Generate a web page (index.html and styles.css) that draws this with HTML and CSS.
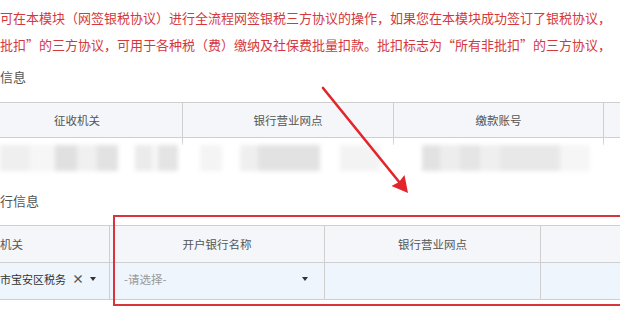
FILE: index.html
```html
<!DOCTYPE html>
<html lang="zh-CN">
<head>
<meta charset="utf-8">
<title>网签银税协议</title>
<link rel="stylesheet" href="styles.css">
</head>
<body>
<div class="page">
  <p class="notice">可在本模块（网签银税协议）进行全流程网签银税三方协议的操作，如果您在本模块成功签订了银税协议，</p>
  <p class="notice">批扣”的三方协议，可用于各种税（费）缴纳及社保费批量扣款。批扣标志为“所有非批扣”的三方协议，</p>

  <h3 class="section-title first">信息</h3>
  <div class="table t1">
    <div class="cell head">征收机关</div>
    <div class="cell head">银行营业网点</div>
    <div class="cell head">缴款账号</div>
    <div class="cell head"></div>
    <div class="cell stub"></div>
    <div class="cell stub"></div>
    <div class="cell stub"></div>
    <div class="cell stub"></div>
  </div>
  <div class="mosaic"></div>

  <h3 class="section-title second">行信息</h3>
  <div class="table t2">
    <div class="cell head lead">机关</div>
    <div class="cell head">开户银行名称</div>
    <div class="cell head">银行营业网点</div>
    <div class="cell head"></div>
    <div class="cell body select-cell filled">
      <span class="sel-text">市宝安区税务</span>
      <span class="clear">×</span>
      <span class="caret"></span>
    </div>
    <div class="cell body select-cell empty">
      <span class="placeholder">-请选择-</span>
      <span class="caret"></span>
    </div>
    <div class="cell body"></div>
    <div class="cell body"></div>
  </div>
</div>

<svg class="arrow" width="620" height="309" viewBox="0 0 620 309">
  <line x1="323" y1="88" x2="400" y2="183" stroke="#e3262b" stroke-width="2.6" stroke-linecap="round"/>
  <polygon points="408,193 391.5,186 399,182 404.5,175" fill="#e3262b"/>
</svg>
<div class="highlight"></div>
</body>
</html>
```

FILE: styles.css
```css
html, body {
  margin: 0;
  padding: 0;
}
body {
  width: 620px;
  height: 309px;
  overflow: hidden;
  background: #ffffff;
  font-family: "Noto Sans CJK SC", "Noto Sans", sans-serif;
  position: relative;
}
.page {
  padding-top: 4px;
}
.notice {
  margin: 0;
  font-size: 13px;
  line-height: 27px;
  color: #d4373c;
  white-space: nowrap;
}
.section-title {
  margin: 0;
  font-size: 13px;
  line-height: 20px;
  font-weight: normal;
  color: #555555;
}
.section-title.first {
  margin: 9px 0 15px;
}
.section-title.second {
  margin: 20px 0 14px;
}
.table {
  display: grid;
  border-top: 1px solid #cfcfcf;
}
.t1 {
  margin-left: -28px;
  grid-template-columns: 210px 211px 210px 210px;
}
.t2 {
  grid-template-columns: 109px 215px 216px 216px;
  border-bottom: 1px solid #cfcfcf;
}
.cell {
  border-left: 1px solid #cfcfcf;
  box-sizing: border-box;
}
.cell:nth-child(4n+1) {
  border-left: none;
}
.cell.head {
  height: 35px;
  background: #f4f6f9;
  border-bottom: 1px solid #cfcfcf;
  display: flex;
  align-items: center;
  justify-content: center;
  font-size: 11.5px;
  color: #555555;
}
.cell.head.lead {
  justify-content: flex-start;
}
.t2 .cell.head {
  height: 37px;
}
.cell.stub {
  height: 7px;
}
.cell.body {
  height: 36px;
  background: #eef5fc;
}
.mosaic {
  height: 26px;
  width: 620px;
  filter: blur(2.2px);
  background: linear-gradient(to right,
    #efefef 0 30px, #f6f6f6 30px 55px, #e0e0e0 55px 77px, #f0f0f0 77px 97px,
    #e2e2e2 97px 118px, #ffffff 118px 135px, #ebebeb 135px 152px, #f7f7f7 152px 158px,
    #e4e4e4 158px 178px, #ffffff 178px 200px, #f4f4f4 200px 222px, #ffffff 222px 240px,
    #efefef 240px 258px, #e2e2e2 258px 320px, #ffffff 320px 340px, #f3f3f3 340px 380px,
    #ffffff 380px 422px, #e2e2e2 422px 440px, #ededed 440px 460px, #e5e5e5 460px 480px,
    #efefef 480px 500px, #e8e8e8 500px 560px, #f6f6f6 560px 590px, #ffffff 590px);
}
.select-cell {
  display: flex;
  align-items: center;
  padding-bottom: 4px;
  overflow: hidden;
  white-space: nowrap;
}
.select-cell.filled {
  justify-content: flex-start;
  color: #333333;
  font-size: 11px;
}
.select-cell.empty {
  justify-content: space-between;
  padding-left: 14px;
  padding-right: 16px;
  font-size: 11.5px;
}
.placeholder {
  color: #9a9a9a;
}
.clear {
  margin-left: 6px;
  font-size: 12px;
  font-weight: bold;
  color: #555555;
  line-height: 1;
}
.caret {
  width: 0;
  height: 0;
  border-left: 3px solid transparent;
  border-right: 3px solid transparent;
  border-top: 4px solid #333333;
  margin-left: 6px;
}
.arrow {
  position: absolute;
  left: 0;
  top: 0;
  pointer-events: none;
}
.highlight {
  position: absolute;
  left: 113px;
  top: 215px;
  width: 530px;
  height: 91px;
  box-sizing: border-box;
  border: 2px solid #d9343c;
  pointer-events: none;
}
```
